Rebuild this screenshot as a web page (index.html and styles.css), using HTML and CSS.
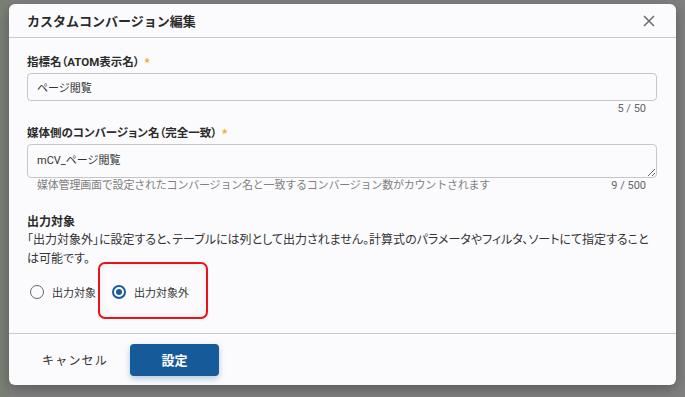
FILE: index.html
```html
<!DOCTYPE html>
<html>
<head>
    <title>カスタムコンバージョン編集</title>
    <link rel="stylesheet" href="styles.css">
</head>
<body>
    <div class="backdrop">
        <div class="dialog">
            <div class="dialog-header">
                <h1>カスタムコンバージョン編集</h1>
                <button class="close-btn" aria-label="閉じる">
                    <svg width="12" height="12" viewBox="0 0 12 12">
                        <path d="M1 1 L11 11 M11 1 L1 11" stroke="#6b6b6b" stroke-width="1.5" fill="none"/>
                    </svg>
                </button>
            </div>

            <div class="dialog-body">
                <label class="field-label">指標名（ATOM表示名）<span class="required">*</span></label>
                <input class="text-input" type="text" value="ページ閲覧">
                <div class="field-meta">
                    <span></span>
                    <span>5 / 50</span>
                </div>

                <label class="field-label second">媒体側のコンバージョン名（完全一致）<span class="required">*</span></label>
                <textarea class="text-area">mCV_ページ閲覧</textarea>
                <div class="field-meta">
                    <span class="hint">媒体管理画面で設定されたコンバージョン名と一致するコンバージョン数がカウントされます</span>
                    <span>9 / 500</span>
                </div>

                <div class="section-title">出力対象</div>
                <p class="description">「出力対象外」に設定すると、テーブルには列として出力されません。計算式のパラメータやフィルタ、ソートにて指定することは可能です。</p>

                <div class="radio-group">
                    <label class="radio-option">
                        <span class="radio"></span>
                        出力対象
                    </label>
                    <label class="radio-option selected">
                        <span class="radio checked"></span>
                        出力対象外
                        <span class="highlight"></span>
                    </label>
                </div>
            </div>

            <div class="dialog-footer">
                <button class="cancel-btn">キャンセル</button>
                <button class="submit-btn">設定</button>
            </div>
        </div>
    </div>
</body>
</html>
```

FILE: styles.css
```css
* {
    margin: 0;
    padding: 0;
    box-sizing: border-box;
}

body {
    font-family: Roboto, "Noto Sans CJK JP", sans-serif;
    background-color: #7f7f7f;
    color: #333;
}

.backdrop {
    width: 685px;
    height: 397px;
    padding: 4px 9px 0 9px;
    background:
        linear-gradient(90deg, #7a8076 0, #7a8076 9px, transparent 9px),
        #808080;
}

.dialog {
    width: 667px;
    height: 381px;
    background-color: #fbfbfd;
    border-radius: 6px;
    box-shadow: 0 4px 14px rgba(0, 0, 0, 0.3);
    display: flex;
    flex-direction: column;
}

.dialog-header {
    height: 34px;
    padding: 0 21px 0 18px;
    display: flex;
    align-items: center;
    justify-content: space-between;
    border-bottom: 1px solid #cacaca;
}

.dialog-header h1 {
    font-size: 13px;
    font-weight: bold;
    color: #2b2b2b;
}

.close-btn {
    background: none;
    border: none;
    display: flex;
    cursor: pointer;
}

.dialog-body {
    flex: 1;
    padding: 15px 19px 0 18px;
}

.field-label {
    display: block;
    font-size: 11.5px;
    font-weight: bold;
    font-feature-settings: "palt";
    line-height: 18px;
    margin-bottom: 2px;
    color: #2b2b2b;
}

.field-label.second {
    margin-top: 8px;
}

.required {
    color: #f5a020;
    margin-left: 5px;
}

.text-input,
.text-area {
    display: block;
    width: 100%;
    border: 1px solid #c6c6c6;
    border-radius: 4px;
    background-color: #fbfbfd;
    font-family: inherit;
    font-size: 11px;
    color: #333;
    padding: 0 9px;
}

.text-input {
    height: 28px;
}

.text-area {
    height: 34px;
    padding-top: 8px;
    resize: vertical;
    line-height: 16px;
}

.field-meta {
    display: flex;
    justify-content: space-between;
    font-size: 11px;
    line-height: 15px;
    color: #666;
    padding: 0 11px 0 10px;
}

.hint {
    color: #808080;
    letter-spacing: -0.2px;
}

.section-title {
    margin-top: 20px;
    font-size: 12px;
    font-weight: bold;
    line-height: 18px;
    color: #2b2b2b;
}

.description {
    font-size: 12px;
    font-feature-settings: "palt";
    line-height: 19px;
    color: #333;
    padding-right: 8px;
}

.radio-group {
    display: flex;
    gap: 16px;
    margin-top: 8px;
    padding-left: 3px;
    height: 30px;
    align-items: center;
}

.radio-option {
    position: relative;
    display: flex;
    align-items: center;
    gap: 8px;
    font-size: 11px;
    color: #333;
}

.radio {
    width: 14px;
    height: 14px;
    border: 1.5px solid #666;
    border-radius: 50%;
    display: flex;
    align-items: center;
    justify-content: center;
}

.radio.checked {
    border: 2px solid #1a5b9c;
}

.radio.checked::after {
    content: "";
    width: 6px;
    height: 6px;
    border-radius: 50%;
    background-color: #1a5b9c;
}

.highlight {
    position: absolute;
    left: -14px;
    right: -19px;
    top: -22px;
    bottom: -19px;
    border: 2px solid #e8131a;
    border-radius: 7px;
    box-shadow: inset 0 0 8px rgba(0, 0, 0, 0.06);
}

.dialog-footer {
    height: 52px;
    border-top: 1px solid #cacaca;
    display: flex;
    align-items: center;
    padding-left: 33px;
    gap: 22px;
}

.cancel-btn {
    background: none;
    border: none;
    font-family: inherit;
    font-size: 12px;
    letter-spacing: 1.2px;
    color: #333;
    cursor: pointer;
}

.submit-btn {
    width: 89px;
    height: 32px;
    background-color: #175a9a;
    color: white;
    border: none;
    border-radius: 4px;
    font-family: inherit;
    font-size: 13px;
    font-weight: bold;
    box-shadow: 0 3px 6px rgba(23, 90, 154, 0.3);
    cursor: pointer;
}
```
